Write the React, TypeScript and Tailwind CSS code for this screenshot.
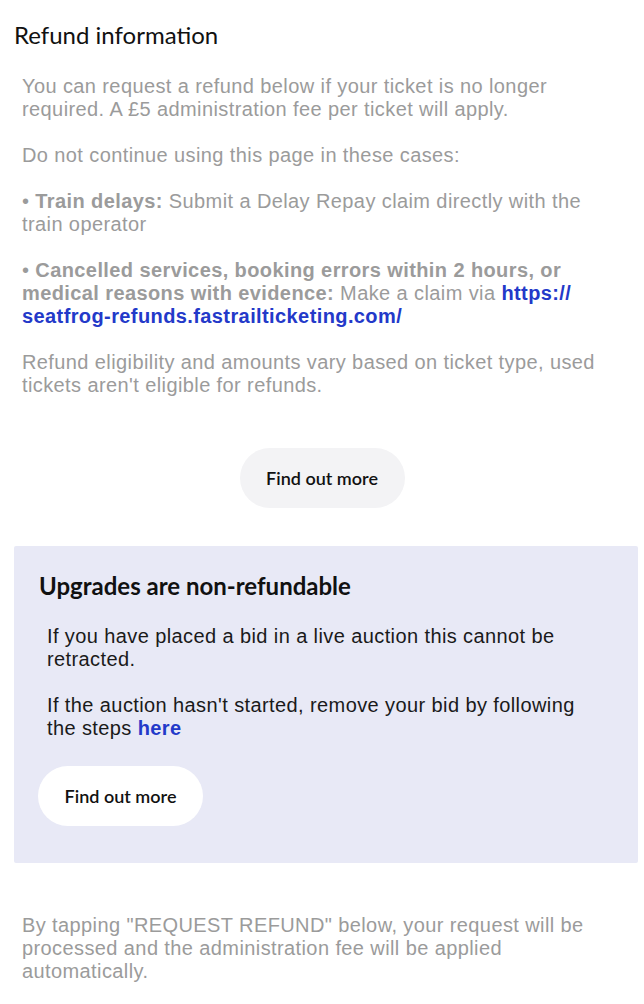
export default function App() {
  const body = "font-['Liberation_Sans',Arial,sans-serif] text-[20px] leading-[23px] tracking-[0.4px]";
  return (
    <div className="min-h-screen bg-white">
      <div className="pl-[14px] pr-[6px] pt-[20px]">
        {/* Heading */}
        <h1 className="font-['Lato',sans-serif] text-[24px] leading-[30px] text-[#111]">
          Refund information
        </h1>

        {/* Refund copy */}
        <div className={`${body} mt-[25px] pl-[8px] pr-[18px] text-[#9b9b9b] flex flex-col gap-[23px]`}>
          <p>
            You can request a refund below if your ticket is no longer required. A £5 administration fee per ticket
            will apply.
          </p>
          <p>Do not continue using this page in these cases:</p>
          <p>
            • <span className="font-bold">Train delays:</span> Submit a Delay Repay claim directly with the train
            operator
          </p>
          <p>
            • <span className="font-bold">Cancelled services, booking errors within 2 hours, or medical reasons with
            evidence:</span>{" "}
            Make a claim via{" "}
            <a className="font-bold text-[#2339c9]">
              https://<wbr />seatfrog-refunds.fastrailticketing.com/
            </a>
          </p>
          <p>Refund eligibility and amounts vary based on ticket type, used tickets aren't eligible for refunds.</p>
        </div>

        <div className="flex justify-center mt-[51px] pr-[8px]">
          <button className="h-[60px] w-[165px] rounded-full bg-[#f3f3f5] font-['Lato',sans-serif] text-[18px] font-semibold text-[#111]">
            Find out more
          </button>
        </div>

        {/* Upgrades notice */}
        <div className="mt-[38px] bg-[#e8e9f6] rounded-[2px] pl-[25px] pr-[36px] pt-[26px] pb-[37px]">
          <h2 className="font-['Lato',sans-serif] text-[24px] leading-[28px] font-bold text-[#111]">
            Upgrades are non-refundable
          </h2>
          <div className={`${body} mt-[25px] pl-[8px] text-[#1a1a1a] flex flex-col gap-[23px]`}>
            <p>If you have placed a bid in a live auction this cannot be retracted.</p>
            <p>
              If the auction hasn't started, remove your bid by following the steps{" "}
              <a className="font-bold text-[#2339c9]">here</a>
            </p>
          </div>
          <button className="mt-[26px] -ml-[1px] h-[60px] w-[165px] rounded-full bg-white font-['Lato',sans-serif] text-[18px] font-semibold text-[#111]">
            Find out more
          </button>
        </div>

        {/* Footer note */}
        <p className={`${body} mt-[51px] pl-[8px] pr-[18px] text-[#9b9b9b]`}>
          By tapping "REQUEST REFUND" below, your request will be processed and the administration fee will be applied
          automatically.
        </p>
      </div>
    </div>
  );
}
